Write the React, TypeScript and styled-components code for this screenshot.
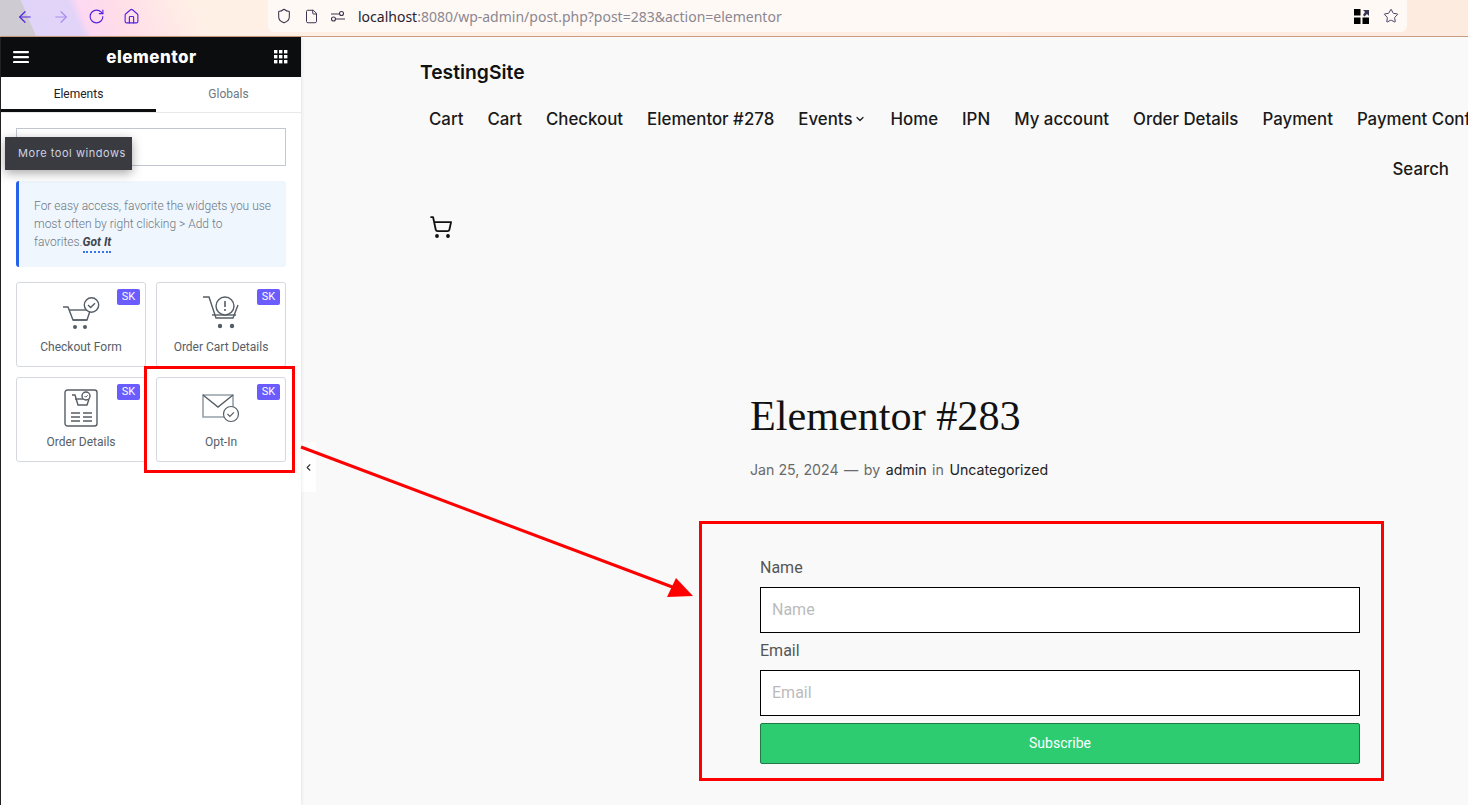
import React from 'react'
import styled, { createGlobalStyle } from 'styled-components'
import { ArrowLeft, ArrowRight, RotateCw, Home, Shield, File, Star, ChevronDown, ChevronLeft, ShoppingCart } from 'lucide-react'

const navItems = ['Cart', 'Cart', 'Checkout', 'Elementor #278', 'Events', 'Home', 'IPN', 'My account', 'Order Details', 'Payment', 'Payment Confirmation']

const CheckoutIcon = () => (
  <svg width="38" height="33" viewBox="0 0 38 33" fill="none" stroke="#555d66" strokeWidth="1.4">
    <path d="M1 10h5l5 13h14l3-9" />
    <path d="M7 13h20" />
    <circle cx="29.5" cy="8" r="7.2" fill="#fff" />
    <path d="M26 8l2.6 2.6 4.4-4.4" />
    <path d="M11 23h14" />
    <circle cx="13" cy="30" r="2" fill="#555d66" stroke="none" />
    <circle cx="23" cy="30" r="2" fill="#555d66" stroke="none" />
  </svg>
)

const CartDetailsIcon = () => (
  <svg width="38" height="34" viewBox="0 0 38 34" fill="none" stroke="#555d66" strokeWidth="1.4">
    <path d="M1 1h6l7 21h17l5-13" />
    <path d="M10 19h24" />
    <circle cx="23" cy="10" r="9" fill="#fff" />
    <path d="M23 5v6M23 13v2" strokeWidth="1.6" />
    <circle cx="18" cy="30" r="2.2" fill="#555d66" stroke="none" />
    <circle cx="30" cy="30" r="2.2" fill="#555d66" stroke="none" />
  </svg>
)

const OrderIcon = () => (
  <svg width="34" height="38" viewBox="0 0 34 38" fill="none" stroke="#555d66" strokeWidth="1.4">
    <rect x="1" y="1" width="32" height="36" rx="2.5" />
    <path d="M8 6h3l3 10h9l2-6" />
    <path d="M11 10h12" />
    <circle cx="22" cy="7" r="4" fill="#fff" />
    <path d="M20.5 7l1.2 1.2 2-2" strokeWidth="1" />
    <path d="M7 24h9M19 24h9M7 28h9M19 28h9M7 32h9M19 32h9" />
  </svg>
)

const OptInIcon = () => (
  <svg width="38" height="30" viewBox="0 0 38 30" fill="none">
    <path d="M1 2h30v22H1z" stroke="#97a0a8" strokeWidth="1.6" />
    <path d="M1 2l15 12L31 2" stroke="#555d66" strokeWidth="1.4" />
    <circle cx="29" cy="21" r="7.5" fill="#fff" stroke="#555d66" strokeWidth="1.2" />
    <path d="M25.5 21l2.4 2.4 4-4" stroke="#555d66" strokeWidth="1.2" />
  </svg>
)

const widgets = [
  { title: 'Checkout Form', icon: <CheckoutIcon /> },
  { title: 'Order Cart Details', icon: <CartDetailsIcon /> },
  { title: 'Order Details', icon: <OrderIcon /> },
  { title: 'Opt-In', icon: <OptInIcon /> },
]

const App: React.FC = () => (
  <Page>
    <GlobalStyle />
    <Toolbar>
      <NavButtons>
        <ArrowLeft size={18} color="#5424e0" strokeWidth={1.6} />
        <ArrowRight size={18} color="#a88df0" strokeWidth={1.6} />
        <RotateCw size={17} color="#5424e0" strokeWidth={1.6} />
        <Home size={17} color="#5424e0" strokeWidth={1.6} />
      </NavButtons>
      <AddressBar>
        <Shield size={16} color="#3a3550" strokeWidth={1.6} />
        <File size={15} color="#3a3550" strokeWidth={1.6} />
        <svg width="14" height="12" viewBox="0 0 14 12" fill="none" stroke="#3a3550" strokeWidth="1.1">
          <path d="M0 4h8M5 9h9" />
          <circle cx="10.5" cy="3.5" r="2" />
          <circle cx="2.5" cy="9" r="2" />
        </svg>
        <Url><strong>localhost</strong>:8080/wp-admin/post.php?post=283&amp;action=elementor</Url>
        <AddressEnd>
          <svg width="15" height="15" viewBox="0 0 15 15" fill="#000">
            <rect width="6.5" height="6.5" />
            <rect y="8.5" width="6.5" height="6.5" />
            <rect x="8.5" y="8.5" width="6.5" height="6.5" />
            <path d="M9 1h6v6l-2-2-2.5 2.5-1.5-1.5L11 3z" fill="#3a3550" />
          </svg>
          <Star size={16} color="#4a3f68" strokeWidth={1.5} />
        </AddressEnd>
      </AddressBar>
    </Toolbar>

    <Workspace>
      <Panel>
        <PanelHeader>
          <svg width="16" height="12" viewBox="0 0 16 12" fill="#fff">
            <rect width="16" height="2.2" rx="1" />
            <rect y="5" width="16" height="2.2" rx="1" />
            <rect y="10" width="16" height="2.2" rx="1" />
          </svg>
          <Logo>elementor</Logo>
          <svg width="14" height="14" viewBox="0 0 14 14" fill="#fff">
            {[0, 5, 10].flatMap((y) => [0, 5, 10].map((x) => <rect key={`${x}-${y}`} x={x} y={y} width="3.4" height="3.4" />))}
          </svg>
        </PanelHeader>
        <Tabs>
          <Tab $active>Elements</Tab>
          <Tab>Globals</Tab>
        </Tabs>
        <PanelBody>
          <SearchBox />
          <Notice>
            For easy access, favorite the widgets you use most often by right clicking &gt; Add to favorites.<GotIt>Got It</GotIt>
          </Notice>
          <WidgetGrid>
            {widgets.map((w) => (
              <WidgetCard key={w.title}>
                <Badge>SK</Badge>
                <WidgetIcon>{w.icon}</WidgetIcon>
                <WidgetTitle>{w.title}</WidgetTitle>
              </WidgetCard>
            ))}
          </WidgetGrid>
        </PanelBody>
        <Tooltip>More tool windows</Tooltip>
      </Panel>

      <Canvas>
        <CollapseTab><ChevronLeft size={11} color="#333" strokeWidth={2.4} /></CollapseTab>
        <SiteHeader>
          <SiteTitle>TestingSite</SiteTitle>
          <NavRow>
            {navItems.map((item, i) => (
              <NavItem key={i}>
                {item}
                {item === 'Events' && <ChevronDown size={12} strokeWidth={2.4} />}
              </NavItem>
            ))}
          </NavRow>
          <SearchRow>Search</SearchRow>
          <CartRow><ShoppingCart size={24} color="#111" strokeWidth={1.8} /></CartRow>
        </SiteHeader>
        <Post>
          <PostTitle>Elementor #283</PostTitle>
          <Meta>
            <span>Jan 25, 2024</span>
            <span>—</span>
            <span>by</span>
            <b>admin</b>
            <span>in</span>
            <b>Uncategorized</b>
          </Meta>
          <Form>
            <Label>Name</Label>
            <Input placeholder="Name" readOnly />
            <Label>Email</Label>
            <Input placeholder="Email" readOnly />
            <Subscribe type="button">Subscribe</Subscribe>
          </Form>
        </Post>
      </Canvas>
    </Workspace>

    <RedBox $left={144} $top={366} $width={151} $height={107} />
    <RedBox $left={699} $top={521} $width={685} $height={260} />
    <ArrowLayer width="1468" height="805" viewBox="0 0 1468 805">
      <line x1="301" y1="447" x2="675" y2="588" stroke="#ff0000" strokeWidth="3" />
      <polygon points="693,596 667,597 676,578" fill="#ff0000" />
    </ArrowLayer>
  </Page>
)

const GlobalStyle = createGlobalStyle`
  html, body {
    margin: 0;
    padding: 0;
    overflow: hidden;
    font-family: Inter, "Liberation Sans", sans-serif;
  }
`

const Page = styled.div`
  position: relative;
  width: 1468px;
  height: 805px;
  overflow: hidden;
  background: #f9f9f9;
`

const Toolbar = styled.div`
  height: 36px;
  display: flex;
  border-bottom: 1px solid #c99b80;
  background: linear-gradient(67deg, #cfcbd2 0, #cfcbd2 2.4%, #e0d4f8 2.45%, #e2d4f8 5.6%, #fdd8f2 6.2%, #ffdde8 8.5%, #fff0e6 14%, #feebe0 100%);
`

const NavButtons = styled.div`
  width: 268px;
  display: flex;
  align-items: center;
  gap: 18px;
  padding: 0 0 3px 16px;
  box-sizing: border-box;
`

const AddressBar = styled.div`
  width: 1139px;
  height: 32px;
  display: flex;
  align-items: center;
  padding: 0 8px 0 8px;
  box-sizing: border-box;
  gap: 12px;
  background: #fff9f5;
  border-radius: 0 0 6px 6px;
`

const Url = styled.div`
  font-family: "Noto Sans", sans-serif;
  font-size: 14px;
  color: #8b8791;
  margin-left: 1px;
  strong {
    font-weight: 400;
    color: #27232f;
  }
`

const AddressEnd = styled.div`
  margin-left: auto;
  display: flex;
  align-items: center;
  gap: 14px;
`

const Workspace = styled.div`
  height: 768px;
  display: flex;
  border-left: 1px solid #222;
`

const Panel = styled.aside`
  position: relative;
  width: 300px;
  flex-shrink: 0;
  background: #fff;
  box-shadow: 1px 0 3px rgba(0, 0, 0, 0.08);
  z-index: 1;
`

const PanelHeader = styled.div`
  height: 40px;
  background: #0c0d0e;
  display: flex;
  align-items: center;
  justify-content: space-between;
  padding: 0 13px 0 12px;
`

const Logo = styled.div`
  color: #fff;
  font-family: Inter, sans-serif;
  font-weight: 800;
  font-size: 17px;
  letter-spacing: 0.5px;
`

const Tabs = styled.div`
  display: flex;
  height: 36px;
  box-sizing: border-box;
  border-bottom: 1px solid #e6e8ea;
`

const Tab = styled.div<{ $active?: boolean }>`
  width: ${(p) => (p.$active ? '155px' : '145px')};
  display: flex;
  align-items: center;
  justify-content: center;
  font-family: Roboto, sans-serif;
  font-size: 12px;
  padding-top: 1px;
  box-sizing: border-box;
  color: ${(p) => (p.$active ? '#1f2124' : '#6d7882')};
  border-bottom: 3px solid ${(p) => (p.$active ? '#0c0d0e' : 'transparent')};
`

const PanelBody = styled.div`
  padding: 15px 15px 0;
  display: flex;
  flex-direction: column;
`

const SearchBox = styled.div`
  height: 38px;
  box-sizing: border-box;
  border: 1px solid #c2c6d0;
  background: #fff;
`

const Notice = styled.div`
  margin-top: 15px;
  height: 86px;
  box-sizing: border-box;
  padding: 16px 12px 0 15px;
  border-left: 3px solid #2563eb;
  border-radius: 3px;
  background: #eff6fe;
  font-family: Roboto, sans-serif;
  font-weight: 300;
  font-size: 12px;
  line-height: 18px;
  color: #6d7882;
`

const GotIt = styled.span`
  font-weight: 700;
  font-style: italic;
  color: #3f444b;
  padding-bottom: 2px;
  border-bottom: 2px dotted #3b74ea;
`

const WidgetGrid = styled.div`
  margin-top: 15px;
  display: grid;
  grid-template-columns: 130px 130px;
  grid-auto-rows: 85px;
  gap: 10px;
`

const WidgetCard = styled.div`
  position: relative;
  box-sizing: border-box;
  border: 1px solid #d5d8dc;
  border-radius: 3px;
  display: flex;
  flex-direction: column;
  align-items: center;
`

const Badge = styled.span`
  position: absolute;
  top: 6px;
  right: 5px;
  width: 23px;
  height: 16px;
  border-radius: 2px;
  background: #6a5cff;
  color: #fff;
  font-family: Roboto, sans-serif;
  font-size: 11px;
  line-height: 16px;
  text-align: center;
`

const WidgetIcon = styled.div`
  height: 44px;
  margin-top: 8px;
  display: flex;
  align-items: center;
  justify-content: center;
`

const WidgetTitle = styled.div`
  margin-top: 5px;
  font-family: Roboto, sans-serif;
  font-size: 12px;
  color: #556068;
`

const Tooltip = styled.div`
  position: absolute;
  left: 4px;
  top: 100px;
  width: 127px;
  height: 33px;
  line-height: 33px;
  padding-left: 13px;
  box-sizing: border-box;
  background: #3a3b41;
  color: #cdd3e2;
  font-size: 11px;
  letter-spacing: 0.55px;
  box-shadow: 0 3px 10px rgba(0, 0, 0, 0.35);
`

const Canvas = styled.main`
  position: relative;
  flex: 1;
  min-width: 0;
  overflow: hidden;
  background: #f9f9f9;
`

const CollapseTab = styled.div`
  position: absolute;
  left: 0;
  top: 405px;
  width: 15px;
  height: 50px;
  background: #fff;
  display: flex;
  align-items: center;
  justify-content: center;
`

const SiteHeader = styled.header`
  padding: 23px 19px 0 119px;
`

const SiteTitle = styled.div`
  font-size: 19.3px;
  font-weight: 600;
  line-height: 24px;
  color: #111;
`

const NavRow = styled.nav`
  margin-top: 23px;
  display: flex;
  white-space: nowrap;
  gap: 24px;
  padding-left: 9px;
  height: 24px;
`

const NavItem = styled.span`
  display: inline-flex;
  align-items: center;
  gap: 2px;
  font-size: 16.85px;
  font-weight: 500;
  line-height: 24px;
  color: #1a1a1a;
`

const SearchRow = styled.div`
  margin-top: 26px;
  text-align: right;
  font-size: 16.85px;
  font-weight: 500;
  line-height: 24px;
  color: #1a1a1a;
`

const CartRow = styled.div`
  margin-top: 34px;
  padding-left: 9px;
  height: 24px;
`

const Post = styled.article`
  margin: 151px 0 0 449px;
  width: 640px;
`

const PostTitle = styled.h1`
  margin: 0;
  font-family: "Liberation Serif", serif;
  font-weight: 400;
  font-size: 42.2px;
  line-height: 52px;
  color: #111;
  white-space: nowrap;
`

const Meta = styled.div`
  margin-top: 16px;
  display: flex;
  gap: 5.5px;
  font-size: 14.2px;
  line-height: 24px;
  color: #6a6a6a;
  b {
    font-weight: 400;
    color: #222;
  }
`

const Form = styled.form`
  margin: 68px 0 0 10px;
  width: 600px;
  display: flex;
  flex-direction: column;
`

const Label = styled.label`
  font-family: Roboto, sans-serif;
  font-size: 16px;
  line-height: 24px;
  color: #555;
  margin-bottom: 7px;
  margin-top: 6px;
`

const Input = styled.input`
  height: 46px;
  box-sizing: border-box;
  padding: 0 11px 2px;
  border: 1px solid #000;
  background: #fff;
  outline: none;
  font-family: Roboto, sans-serif;
  font-size: 16px;
  &::placeholder {
    color: #bbb;
  }
`

const Subscribe = styled.button`
  margin-top: 7px;
  height: 41px;
  padding: 0 0 2px;
  border: 1px solid #1f7a45;
  border-radius: 2px;
  background: #2ecc71;
  color: #fff;
  font-family: Roboto, sans-serif;
  font-size: 14px;
`

const RedBox = styled.div<{ $left: number; $top: number; $width: number; $height: number }>`
  position: absolute;
  left: ${(p) => p.$left}px;
  top: ${(p) => p.$top}px;
  width: ${(p) => p.$width}px;
  height: ${(p) => p.$height}px;
  box-sizing: border-box;
  border: 3px solid #ff0000;
  z-index: 2;
  pointer-events: none;
`

const ArrowLayer = styled.svg`
  position: absolute;
  left: 0;
  top: 0;
  z-index: 2;
  pointer-events: none;
`

export default App
